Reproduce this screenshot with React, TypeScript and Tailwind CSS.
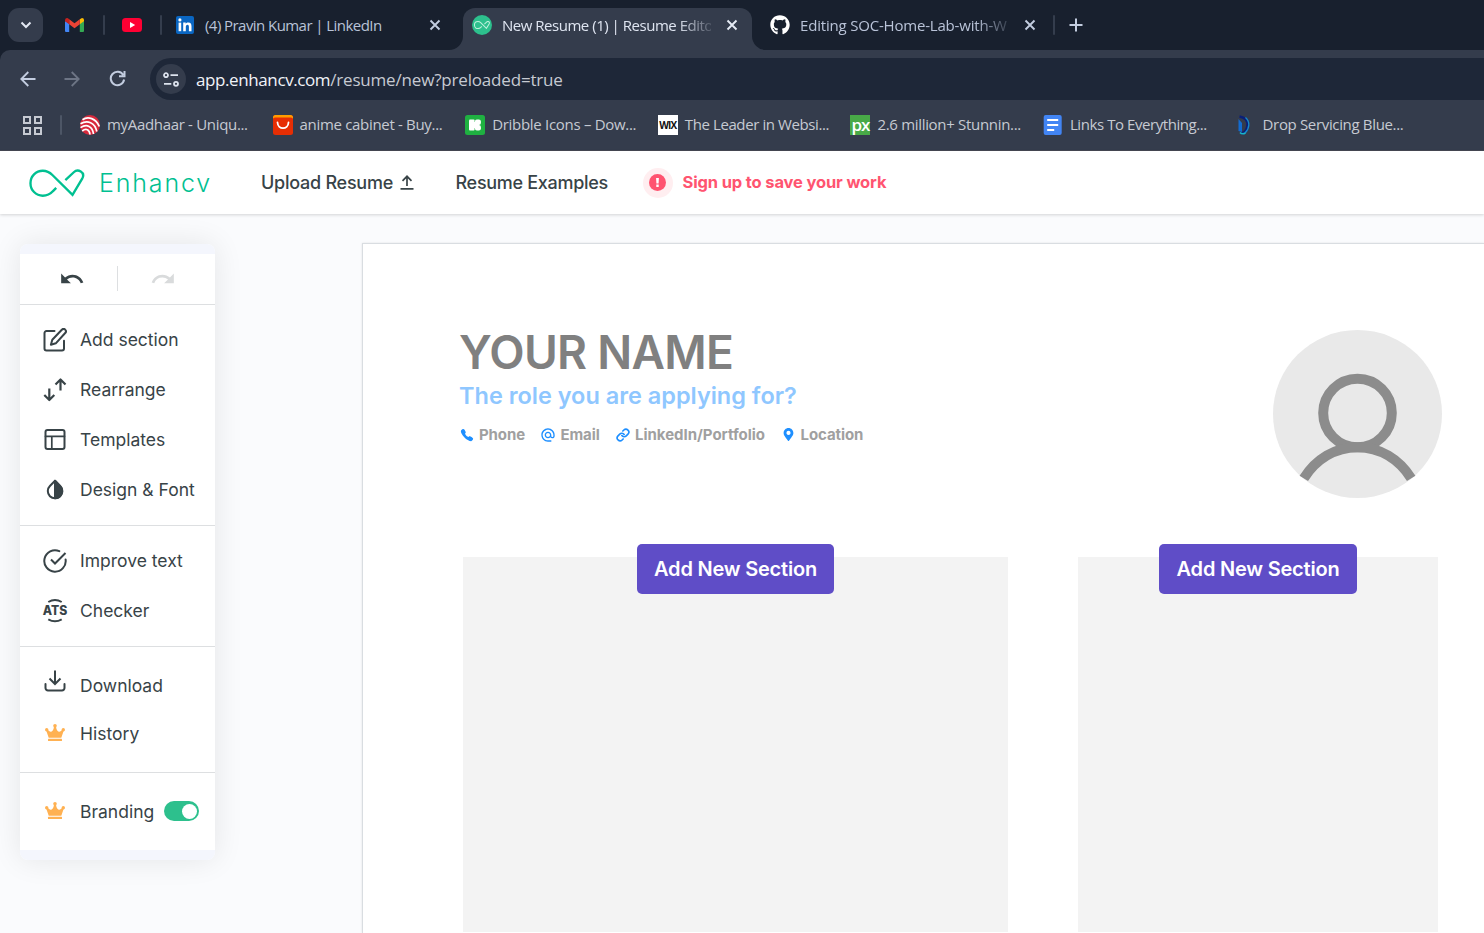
import React from "react";
import { FaGithub, FaMapMarkerAlt } from "react-icons/fa";
import { MdUndo, MdRedo, MdAlternateEmail } from "react-icons/md";
import { IoCall } from "react-icons/io5";

const chromeFont = "font-['Open_Sans','Noto_Sans',sans-serif]";
const appFont = "font-['Inter',sans-serif]";
const headFont = "font-['Inter',sans-serif]";

function CloseIcon({ color }: { color: string }) {
  return (
    <svg width="12" height="12" viewBox="0 0 12 12" fill="none" stroke={color} strokeWidth="1.9" className="shrink-0">
      <path d="M1.500 1.500l9 9M10.500 1.500l-9 9" />
    </svg>
  );
}

function TabSeparator({ className }: { className: string }) {
  return <div className={`h-5 w-[2px] shrink-0 rounded-full bg-[#343d4d] ${className}`} />;
}

function GmailIcon() {
  return (
    <svg width="19" height="14" viewBox="0 0 19 14" className="ml-[22px] shrink-0">
      <path d="M0 3v10a1 1 0 0 0 1 1h3.200V5.500z" fill="#4285f4" />
      <path d="M19 3v10a1 1 0 0 1-1 1h-3.200V5.500z" fill="#34a853" />
      <path d="M14.800 1.200L17 0q2 .2 2 2v1.200l-4.200 3.100z" fill="#fbbc04" />
      <path d="M4.200 6.300V1.200l5.300 4 5.300-4v5.100l-5.300 4z" fill="#ea4335" />
      <path d="M0 3.200V2Q.3 0 2 0q.8 0 2.200 1.200v5.100z" fill="#c5221f" />
    </svg>
  );
}

function YoutubeIcon() {
  return (
    <svg width="20" height="14" viewBox="0 0 20 14" className="ml-[17px] shrink-0">
      <rect width="20" height="14" rx="3.500" fill="#ff0033" />
      <path d="M8 4l5.200 3L8 10z" fill="#fff" />
    </svg>
  );
}

function LinkedinIcon() {
  return (
    <div className="ml-[14px] flex h-[18px] w-[18px] shrink-0 items-center justify-center rounded-[2px] bg-[#0a66c2]">
      <svg width="14" height="14" viewBox="0 0 14 14" fill="#fff">
        <circle cx="1.900" cy="1.900" r="1.600" />
        <rect x=".6" y="4.600" width="2.600" height="8.600" />
        <path d="M5.200 4.600h2.500v1.200c.5-.9 1.500-1.400 2.600-1.400 2.500 0 3.200 1.600 3.200 4v4.800h-2.600V9c0-1.300-.2-2.300-1.400-2.300S7.800 7.700 7.800 9v4.200H5.200z" />
      </svg>
    </div>
  );
}

function InfinityMark({ stroke, width, className, weight }: { stroke: string; width: number; className?: string; weight: number }) {
  return (
    <svg width={width} height={(width * 29) / 57} viewBox="0 0 57 29" fill="none" stroke={stroke} strokeWidth={weight} strokeLinecap="butt" strokeLinejoin="miter" className={className}>
      <path d="M27.700 19.200l-3.500 3.500C21.500 25.800 18 27.200 14 27.200 7 27.200 1.500 21.500 1.500 14.400S7 1.800 14 1.800c4 0 7 1.500 9.800 4.300L44.300 26.300 54.300 9.500C55.700 6.800 55 4 52.700 2.600 50.500 1.300 47.500 1.500 45.600 3.300L37 11.300" />
    </svg>
  );
}

function TabStrip() {
  return (
    <div className={`flex h-[50px] items-center bg-[#18202e] ${chromeFont} text-[15px] text-[#b9c3d8]`}>
      <div className="ml-2 flex h-[34px] w-[35px] shrink-0 items-center justify-center rounded-[11px] bg-[#343c4c]">
        <svg width="12" height="8" viewBox="0 0 12 8" fill="none" stroke="#e3e8f3" strokeWidth="2">
          <path d="M1.500 1.500L6 6l4.500-4.500" />
        </svg>
      </div>
      <GmailIcon />
      <TabSeparator className="ml-[19px]" />
      <YoutubeIcon />
      <TabSeparator className="ml-[18px]" />
      <LinkedinIcon />
      <div className="ml-[11px] w-[224px] shrink-0 whitespace-nowrap tracking-[-0.560px]">(4) Pravin Kumar | LinkedIn</div>
      <CloseIcon color="#c3cde0" />
      <div className="relative ml-[22px] mt-2 flex h-[42px] w-[289px] shrink-0 items-center rounded-t-[12px] bg-[#343c4c] pb-2">
        <svg className="absolute bottom-0 left-[-14px]" width="14" height="14" viewBox="0 0 14 14" fill="#343c4c">
          <path d="M14 0v14H0A14 14 0 0 0 14 0z" />
        </svg>
        <svg className="absolute bottom-0 right-[-14px]" width="14" height="14" viewBox="0 0 14 14" fill="#343c4c">
          <path d="M0 0v14h14A14 14 0 0 1 0 0z" />
        </svg>
        <div className="ml-[9px] flex h-5 w-5 shrink-0 items-center justify-center rounded-full bg-[#2dc08d]">
          <InfinityMark stroke="#bff0dd" width={16} weight={3.6} />
        </div>
        <div className="ml-[10px] w-[209px] shrink-0 whitespace-nowrap tracking-[-0.480px] text-[#dfe5f1] [mask-image:linear-gradient(to_right,#000_175px,transparent_216px)]">
          New Resume (1) | Resume Edito
        </div>
        <div className="ml-[15px] flex">
          <CloseIcon color="#e6ebf5" />
        </div>
      </div>
      <FaGithub size={20} color="#fff" className="ml-[18px] shrink-0" />
      <div className="ml-[10px] w-[209px] shrink-0 whitespace-nowrap tracking-[-0.190px] [mask-image:linear-gradient(to_right,#000_175px,transparent_216px)]">
        Editing SOC-Home-Lab-with-W
      </div>
      <div className="ml-[15px] flex">
        <CloseIcon color="#c3cde0" />
      </div>
      <TabSeparator className="ml-[17px]" />
      <svg width="14" height="14" viewBox="0 0 14 14" stroke="#c3cde0" strokeWidth="2" className="ml-[14px] shrink-0">
        <path d="M7 .5v13M.5 7h13" />
      </svg>
    </div>
  );
}

function AddressBar() {
  return (
    <div className="flex h-[42px] items-center">
      <svg width="16" height="16" viewBox="0 0 16 16" fill="none" stroke="#c3cde0" strokeWidth="1.800" className="mb-px ml-5 shrink-0">
        <path d="M15.500 8H1.500M8.300 1L1.300 8l7 7" />
      </svg>
      <svg width="16" height="16" viewBox="0 0 16 16" fill="none" stroke="#6d7585" strokeWidth="1.800" className="mb-px ml-7 shrink-0">
        <path d="M.5 8h14M7.700 1l7 7-7 7" />
      </svg>
      <svg width="17" height="17" viewBox="0 0 17 17" fill="none" stroke="#c3cde0" strokeWidth="2" className="mb-px ml-[29px] shrink-0">
        <path d="M14.200 5A6.700 6.700 0 1 0 15.100 9.500M15.500 1v5.300h-5.500" />
      </svg>
      <div className="ml-6 flex h-[42px] grow items-center rounded-l-full bg-[#1e2738]">
        <div className="ml-[6px] flex h-[30px] w-[30px] shrink-0 items-center justify-center rounded-full bg-[#343c4c]">
          <svg width="16" height="15" viewBox="0 0 16 15" fill="none" stroke="#dde3ee" strokeWidth="1.800">
            <circle cx="3" cy="3.200" r="2" />
            <path d="M7.500 3.200h7.500M1 11.800h7.300" />
            <circle cx="13" cy="11.800" r="2" />
          </svg>
        </div>
        <div className={`ml-[10px] pt-[2px] whitespace-nowrap text-[17px] text-[#c6cad2] ${chromeFont}`}>
          <span className="tracking-[-0.400px] text-[#f1f3f8]">app.enhancv.com</span>
          <span className="tracking-[-0.180px]">/resume/new?preloaded=true</span>
        </div>
      </div>
    </div>
  );
}

const bookmarks: { label: string; icon: React.ReactNode; tracking: string }[] = [
  {
    label: "myAadhaar - Uniqu...",
    tracking: "tracking-[-0.320px]",
    icon: (
      <svg width="20" height="20" viewBox="0 0 20 20" fill="none">
        <circle cx="10" cy="10" r="10" fill="#d8293c" />
        <g stroke="#fff" strokeWidth="1.700">
          <path d="M2.500 4.800C8 .8 16 3.500 19.300 11.500" />
          <path d="M.5 8.700C7.500 4.500 15 7.500 16.800 16.500" />
          <path d="M.5 12.600C7 8.500 12.500 11.500 13.500 19" />
          <path d="M2.200 16C6 13 9.500 14.500 10 19.500" />
        </g>
      </svg>
    ),
  },
  {
    label: "anime cabinet - Buy...",
    tracking: "tracking-[-0.320px]",
    icon: (
      <svg width="20" height="20" viewBox="0 0 20 20" fill="none">
        <rect width="20" height="20" rx="2.500" fill="#e62e04" />
        <path d="M0 4V2.500A2.500 2.500 0 0 1 2.500 0h15A2.500 2.500 0 0 1 20 2.500V4q0-1.500-2-1.500H2Q0 2.500 0 4z" fill="#ff9d00" />
        <path d="M4.500 7.500c.5 7.500 10.500 7.500 11 0" stroke="#fff" strokeWidth="1.800" strokeLinecap="round" />
      </svg>
    ),
  },
  {
    label: "Dribble Icons – Dow...",
    tracking: "tracking-[-0.300px]",
    icon: (
      <svg width="20" height="20" viewBox="0 0 20 20">
        <rect width="20" height="20" rx="2.500" fill="#1fb141" />
        <rect x="4" y="4.500" width="5.600" height="11" rx="1" fill="#fff" />
        <rect x="8.500" y="7" width="5" height="6" fill="#fff" />
        <rect x="9.900" y="4.500" width="6" height="5.500" rx="2" fill="#fff" />
        <rect x="9.900" y="10" width="6" height="5.500" rx="2" fill="#fff" />
      </svg>
    ),
  },
  {
    label: "The Leader in Websi...",
    tracking: "tracking-[-0.400px]",
    icon: (
      <div className="flex h-5 w-5 items-center justify-center bg-white text-[10px] leading-none font-bold tracking-[-0.800px] text-[#111] font-['Open_Sans',sans-serif]">
        WIX
      </div>
    ),
  },
  {
    label: "2.6 million+ Stunnin...",
    tracking: "tracking-[-0.310px]",
    icon: (
      <div className="flex h-5 w-5 items-center justify-center bg-[#48a947] pb-[2px] text-[17px] leading-none font-semibold tracking-[-1px] text-white font-['Open_Sans',sans-serif]">
        px
      </div>
    ),
  },
  {
    label: "Links To Everything...",
    tracking: "tracking-[-0.430px]",
    icon: (
      <svg width="20" height="20" viewBox="0 0 20 20">
        <rect x=".7" width="18" height="20" rx="2" fill="#4285f4" />
        <path d="M4.200 4.900h11M4.200 9.900h11M4.200 14.900h7" stroke="#fff" strokeWidth="2" />
      </svg>
    ),
  },
  {
    label: "Drop Servicing Blue...",
    tracking: "tracking-[-0.340px]",
    icon: (
      <svg width="20" height="20" viewBox="0 0 20 20" fill="none">
        <path d="M2.500 4v12l3.500 1V8z" fill="#126bd0" />
        <path d="M3.500 1.500C9 2.500 12 6 11.500 10.500 11 15 9 17.500 5.500 18.500" stroke="#0a1f78" strokeWidth="2.600" />
        <path d="M9.500 2.500c4.500 4 4.500 10.500-.5 15.500" stroke="#1688cc" strokeWidth="1.300" />
        <path d="M4 17.500q2 2.200 5.500.5" stroke="#18b5c9" strokeWidth="1.600" />
      </svg>
    ),
  },
];

function BookmarkBar() {
  return (
    <div className="flex h-[50px] items-center">
      <svg width="19" height="19" viewBox="0 0 19 19" fill="none" stroke="#c6cad2" strokeWidth="2" className="ml-[23px] shrink-0">
        <rect x="1" y="1" width="6" height="6" />
        <rect x="12" y="1" width="6" height="6" />
        <rect x="1" y="12" width="6" height="6" />
        <rect x="12" y="12" width="6" height="6" />
      </svg>
      <div className="ml-[18px] h-5 w-[2px] shrink-0 rounded-full bg-[#4d5666]" />
      <div className="ml-[18px] flex">
        {bookmarks.map((b) => (
          <div key={b.label} className="flex w-[192.6px] shrink-0 items-center">
            {b.icon}
            <span className={`ml-[7px] pb-[2px] whitespace-nowrap text-[15px] text-[#c6cad2] ${chromeFont} ${b.tracking}`}>{b.label}</span>
          </div>
        ))}
      </div>
    </div>
  );
}

function Header() {
  return (
    <header className={`relative z-10 flex h-[63px] shrink-0 items-center bg-white shadow-[0_1px_3px_rgba(0,0,0,0.16)] ${appFont}`}>
      <InfinityMark stroke="#00c091" width={56} weight={2.4} className="mt-[2px] ml-[29px] shrink-0" />
      <div className="mt-px ml-[14px] w-[116px] shrink-0 text-[25px] leading-none font-light tracking-[1.850px] text-[#00c091] font-['Inter',sans-serif]">Enhancv</div>
      <div className="ml-[46px] w-[131px] shrink-0 whitespace-nowrap text-[18px] font-medium tracking-[-0.250px] text-[#384347]">Upload Resume</div>
      <svg width="14" height="15" viewBox="0 0 14 15" fill="none" stroke="#384347" strokeWidth="1.700" className="ml-[8px] shrink-0">
        <path d="M.5 13.800h13M7 11V1.500M2.500 5.800L7 1.300l4.500 4.500" />
      </svg>
      <div className="ml-[41.500px] w-[153px] shrink-0 whitespace-nowrap text-[18px] font-medium tracking-[-0.300px] text-[#384347]">Resume Examples</div>
      <div className="ml-[34px] flex h-[30px] w-[30px] shrink-0 items-center justify-center rounded-full bg-[#ffeef0]">
        <svg width="17" height="17" viewBox="0 0 17 17">
          <circle cx="8.500" cy="8.500" r="8.500" fill="#ff5470" />
          <path d="M7.100 4h2.800l-.3 5.400H7.400zM7.300 10.600h2.400v2.300H7.300z" fill="#fff" />
        </svg>
      </div>
      <div className="ml-[10px] whitespace-nowrap text-[16.500px] font-bold tracking-[-0.140px] text-[#ff5470]">Sign up to save your work</div>
    </header>
  );
}

const iconProps = {
  width: 24,
  height: 24,
  viewBox: "0 0 24 24",
  fill: "none",
  stroke: "#384347",
  strokeWidth: 2,
  strokeLinecap: "round" as const,
  strokeLinejoin: "round" as const,
};

const EditIcon = (
  <svg {...iconProps} strokeWidth={2}>
    <path d="M11.500 3H3.500A2 2 0 0 0 1.500 5v15.500a2 2 0 0 0 2 2H19a2 2 0 0 0 2-2v-7.800" />
    <path d="M18.800 1.700a2.350 2.350 0 0 1 3.400 3.300L12.800 15.300 7.900 16.800l1.400-5z" />
  </svg>
);
const RearrangeIcon = (
  <svg {...iconProps} strokeWidth={2.200} strokeLinecap="butt">
    <path d="M6.300 10.500v11M1.300 17l5 5 5-5M17.500 12.500V2M12.500 6.500l5-5 5 5" />
  </svg>
);
const TemplateIcon = (
  <svg {...iconProps}>
    <rect x="2.500" y="2" width="19" height="19" rx="2" />
    <path d="M2.500 8.300h19M8.800 8.300V21" strokeWidth="1.700" />
  </svg>
);
const DropIcon = (
  <svg {...iconProps}>
    <path d="M12 2.800l5.100 5.200a7.200 7.200 0 1 1-10.200 0z" />
    <path d="M12 2.800l5.100 5.200A7.200 7.200 0 0 1 12 20.300z" fill="#384347" />
  </svg>
);
const CheckIcon = (
  <svg {...iconProps}>
    <path d="M22.600 10.500A10.700 10.700 0 1 1 16.300 2.200" />
    <path d="M8 10.500l4 4L22.500 4" strokeLinecap="butt" strokeLinejoin="miter" />
  </svg>
);
const AtsIcon = (
  <svg {...iconProps} strokeLinecap="butt" className="overflow-visible">
    <path d="M5.300 3q6.700-4 13.400 0M5.300 20.300q6.700 4 13.400 0" />
    <text x="12" y="16" textAnchor="middle" textLength="24.500" lengthAdjust="spacingAndGlyphs" fontSize="12.500" fontWeight="800" fontFamily="Inter, sans-serif" fill="#384347" stroke="none">
      ATS
    </text>
  </svg>
);
const DownloadIcon = (
  <svg {...iconProps} className="-mt-[10px]">
    <path d="M2.500 15v4a2.500 2.500 0 0 0 2.500 2.500h14a2.500 2.500 0 0 0 2.500-2.500v-4" />
    <path d="M12 1.500v14M6.500 9.500L12 15l5.500-5.500" strokeLinecap="butt" strokeLinejoin="miter" />
  </svg>
);
const CrownIcon = (
  <svg width="20" height="17" viewBox="0 0 20 17" fill="#ffb152" className="-mt-[3px]">
    <circle cx="1.700" cy="5.800" r="1.700" />
    <circle cx="10" cy="1.800" r="1.800" />
    <circle cx="18.300" cy="5.800" r="1.700" />
    <path d="M1.200 6.500l1.700-.7C4.500 8.500 8.300 9 9 2.500h2c.7 6.500 4.500 6 6.100 3.300l1.700.7-2.500 7.300H3.700z" />
    <rect x="3" y="14.800" width="14" height="2.200" rx=".6" />
  </svg>
);

function MenuItem({ icon, label, height, children }: { icon: React.ReactNode; label: string; height: string; children?: React.ReactNode }) {
  return (
    <div className={`flex items-center pl-[23px] ${height}`}>
      <div className="flex w-6 shrink-0 justify-center">{icon}</div>
      <span className="ml-[13px] whitespace-nowrap text-[17.500px] text-[#384347]">{label}</span>
      {children}
    </div>
  );
}

function Sidebar() {
  return (
    <aside className={`flex w-[195px] shrink-0 flex-col self-start overflow-hidden rounded-[8px] bg-white shadow-[0_0_30px_rgba(0,0,0,0.09)] ${appFont}`}>
      <div className="h-[10px] bg-[#f4f6fd]" />
      <div className="flex h-[51px] items-center border-b border-[#dddfe1] pb-[2px]">
        <div className="flex w-[97px] justify-center pl-[7px]">
          <MdUndo size={26} color="#384347" className="mt-px" />
        </div>
        <div className="h-[25px] w-px bg-[#dddfe1]" />
        <div className="flex grow justify-center pr-[7px]">
          <MdRedo size={26} color="#d9dbdc" className="mt-px" />
        </div>
      </div>
      <div className="border-b border-[#dddfe1] py-[10px]">
        <MenuItem icon={EditIcon} label="Add section" height="h-[50px]" />
        <MenuItem icon={RearrangeIcon} label="Rearrange" height="h-[50px]" />
        <MenuItem icon={TemplateIcon} label="Templates" height="h-[50px]" />
        <MenuItem icon={DropIcon} label="Design &amp; Font" height="h-[50px]" />
      </div>
      <div className="border-b border-[#dddfe1] py-[10px]">
        <MenuItem icon={CheckIcon} label="Improve text" height="h-[50px]" />
        <MenuItem icon={AtsIcon} label="Checker" height="h-[50px]" />
      </div>
      <div className="border-b border-[#dddfe1] pt-[15px] pb-[14px]">
        <MenuItem icon={DownloadIcon} label="Download" height="h-[48px]" />
        <MenuItem icon={CrownIcon} label="History" height="h-[48px]" />
      </div>
      <div className="h-[77px] pt-[15px]">
        <MenuItem icon={CrownIcon} label="Branding" height="h-[48px]">
          <div className="mr-4 mb-[2px] ml-auto flex h-5 w-[35px] items-center justify-end rounded-full bg-[#2dc08d] pr-[2px]">
            <div className="h-[15px] w-[15px] rounded-full bg-white" />
          </div>
        </MenuItem>
      </div>
      <div className="h-[10px] bg-[#f4f6fd]" />
    </aside>
  );
}

function ContactRow() {
  const label = "whitespace-nowrap text-[15px] font-bold leading-none text-[#a0a0a0]";
  return (
    <div className={`flex h-5 items-center ${appFont}`}>
      <IoCall size={14} color="#1e8fff" className="mt-px shrink-0" />
      <span className={`ml-[5px] w-[46px] tracking-[-0.100px] ${label}`}>Phone</span>
      <MdAlternateEmail size={16} color="#1e8fff" className="mt-px ml-[15px] shrink-0" />
      <span className={`ml-[4.500px] w-[40px] tracking-[-0.100px] ${label}`}>Email</span>
      <svg width="14" height="14" viewBox="0 0 24 24" fill="none" stroke="#1e8fff" strokeWidth="2.800" strokeLinecap="round" className="mt-px ml-[15.500px] shrink-0">
        <path d="M10 13a5 5 0 0 0 7.540.540l3-3a5 5 0 0 0-7.070-7.070l-1.720 1.710" />
        <path d="M14 11a5 5 0 0 0-7.540-.540l-3 3a5 5 0 0 0 7.070 7.070l1.710-1.710" />
      </svg>
      <span className={`ml-[5px] w-[131px] tracking-[-0.020px] ${label}`}>LinkedIn/Portfolio</span>
      <FaMapMarkerAlt size={13} color="#1e8fff" className="mt-px ml-[15.500px] shrink-0" />
      <span className={`ml-[6px] tracking-[-0.080px] ${label}`}>Location</span>
    </div>
  );
}

function AddSectionBox({ className, buttonClass }: { className: string; buttonClass: string }) {
  return (
    <div className={`flex h-[375px] justify-center bg-[#f3f3f3] ${className}`}>
      <button className={`-mt-[13px] h-[50px] rounded-[5px] bg-[#5f4dc7] text-[20px] font-semibold tracking-[-0.210px] whitespace-nowrap text-white ${headFont} ${buttonClass}`}>
        Add New Section
      </button>
    </div>
  );
}

function ResumePage() {
  return (
    <main className="ml-[147px] flex grow flex-col border-t border-l border-[#d9dde1] bg-white shadow-[0_0_2px_rgba(0,0,0,0.1)]">
      <div className="flex h-[313px] justify-between pr-[42px] pl-[97px]">
        <div className="pt-[80px]">
          <h1 className={`-ml-px h-[56px] text-[46px] leading-[56px] font-semibold tracking-[-0.700px] whitespace-nowrap text-[#808080] ${headFont}`}>YOUR NAME</h1>
          <h2 className={`mt-px -ml-px h-[30px] text-[23.500px] leading-[30px] font-semibold tracking-[-0.010px] whitespace-nowrap text-[#8fc7ff] ${headFont}`}>The role you are applying for?</h2>
          <div className="mt-[13px]">
            <ContactRow />
          </div>
        </div>
        <svg width="169" height="168" viewBox="0 0 169 168" className="mt-[86px]">
          <ellipse cx="84.500" cy="84" rx="84.500" ry="84" fill="#e9e9e9" />
          <circle cx="84.500" cy="83" r="34.300" fill="none" stroke="#8c8c8c" strokeWidth="10" />
          <path d="M30.800 148.300C43 129 62 117.200 84.500 117.200S126 129 138.200 148.300" fill="none" stroke="#8c8c8c" strokeWidth="10" />
        </svg>
      </div>
      <div className="flex pl-[100px]">
        <AddSectionBox className="w-[545px]" buttonClass="w-[197px]" />
        <AddSectionBox className="ml-[70px] w-[360px]" buttonClass="w-[198px]" />
      </div>
    </main>
  );
}

export default function App() {
  return (
    <div className="flex h-[933px] w-[1484px] flex-col overflow-hidden bg-[#fafbfd]">
      <div className="shrink-0 bg-[#18202e]">
        <TabStrip />
        <div className="h-[101px] rounded-tl-[10px] border-b border-[#454753] bg-[#343c4c] pt-2">
          <AddressBar />
          <BookmarkBar />
        </div>
      </div>
      <Header />
      <div className="flex grow pt-[29px] pl-5">
        <div className="flex self-start pt-px">
          <Sidebar />
        </div>
        <ResumePage />
      </div>
    </div>
  );
}
